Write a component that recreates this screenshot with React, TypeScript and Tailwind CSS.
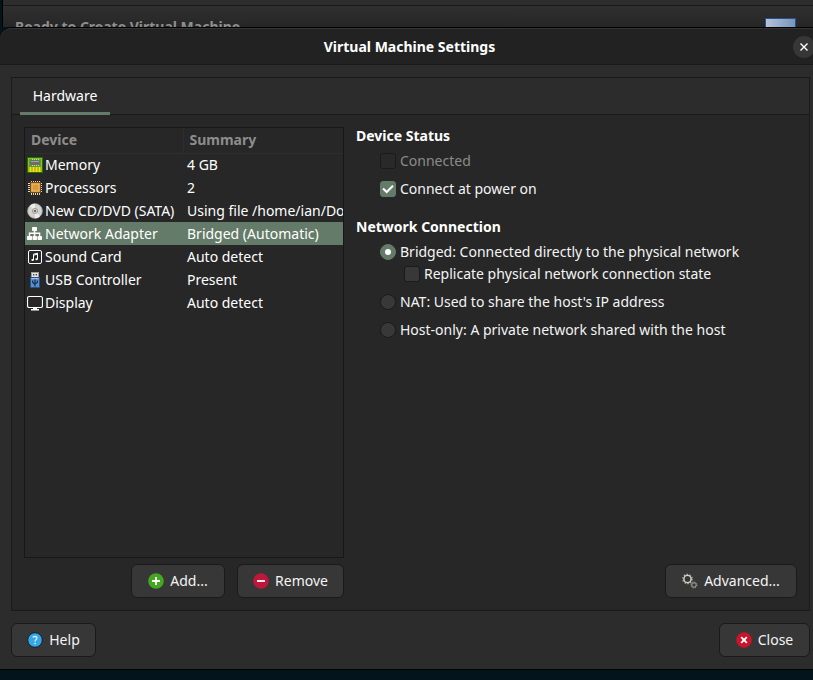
import { useState } from "react";
import type { ReactNode } from "react";

const iconClass = "h-4 w-4 shrink-0";

function MemoryIcon() {
  return (
    <svg viewBox="0 0 16 16" className={iconClass} aria-hidden="true">
      <rect x="0.5" y="0.5" width="15" height="15" fill="#4f9a10" stroke="#2c6a04" />
      <rect x="1.5" y="1.5" width="13" height="13" fill="#5f9c34" stroke="#7cc81c" />
      <rect x="2" y="10" width="12" height="4" fill="#a58a08" />
      <path d="M5.5 2v7M7.5 2v7M9.5 2v7M11.5 2v7" stroke="#cfd4ca" strokeWidth="1" />
      <rect x="3" y="3" width="10" height="5" rx="1.5" fill="#6a6e68" />
      <path d="M4 4.5h8" stroke="#a3a7a0" />
      <path d="M3.5 10v5M6.5 10v5M9.5 10v5M12.5 10v5" stroke="#f4e416" strokeWidth="2" />
    </svg>
  );
}

function ProcessorIcon() {
  return (
    <svg viewBox="0 0 16 16" className={iconClass} aria-hidden="true">
      <path
        d="M4.5 1v14M6.5 1v14M8.5 1v14M10.5 1v14M12.5 1v14M1 3.5h14M1 5.5h14M1 7.5h14M1 9.5h14M1 11.5h14"
        stroke="#d6d6d2"
        strokeWidth="1"
      />
      <rect x="3.500" y="2.500" width="10" height="10" fill="#d08a24" stroke="#7d4a08" />
      <rect x="5" y="4" width="7" height="7" fill="#d9983c" stroke="#eebc72" />
    </svg>
  );
}

function DiscIcon() {
  return (
    <svg viewBox="0 0 16 16" className={iconClass} aria-hidden="true">
      <circle cx="8" cy="8" r="7.300" fill="#d2d2d0" stroke="#b4b4b1" strokeWidth="0.8" />
      <path d="M8 8 3 2.700A7 7 0 0 1 8 .8ZM8 8l5 5.300A7 7 0 0 1 8 15.200Z" fill="#ececea" />
      <circle cx="8" cy="8" r="2.500" fill="#dcdcd9" stroke="#8c8c88" strokeWidth="0.9" />
      <circle cx="8" cy="8" r="1.100" fill="#4e4e4a" />
    </svg>
  );
}

function NetworkIcon() {
  return (
    <svg viewBox="0 0 16 16" className={iconClass} fill="#fff" aria-hidden="true">
      <rect x="5" y="1" width="5" height="4" rx="0.7" />
      <rect x="0" y="10" width="5" height="4" rx="0.7" />
      <rect x="5.500" y="10" width="4.500" height="4" rx="0.7" />
      <rect x="10.500" y="10" width="4.500" height="4" rx="0.7" />
      <path d="M6.800 4h1.500v7H6.800zM1.800 6.500h11.500V8H1.800zM1.800 7h1.400v4H1.800zM12 7h1.300v4H12z" />
    </svg>
  );
}

function SoundIcon() {
  return (
    <svg viewBox="0 0 16 16" className={iconClass} fill="none" stroke="#fff" aria-hidden="true">
      <rect x="1.500" y="1.500" width="13" height="13" rx="1.500" />
      <path d="M6.500 11V5.200l4-1V10" />
      <path d="M6.500 6.200l4-1" />
      <ellipse cx="5.600" cy="11" rx="1.300" ry="1" fill="#fff" stroke="none" />
      <ellipse cx="9.600" cy="10.200" rx="1.300" ry="1" fill="#fff" stroke="none" />
    </svg>
  );
}

function UsbIcon() {
  return (
    <svg viewBox="0 0 16 16" className={iconClass} aria-hidden="true">
      <rect x="4.500" y="0.500" width="7" height="5" fill="#e4e4e2" stroke="#9d9d9a" />
      <path d="M6 2h1.300v1.500H6zM8.700 2H10v1.500H8.700z" fill="#444" />
      <path d="M3.500 5.500h9v10h-9z" fill="#5c90cc" stroke="#24528f" />
      <path d="M4.500 6.500h7" stroke="#98bde6" />
      <path d="M8 7.500v7M5.700 8.500v2L8 12.500M10.300 8.500v2L8 12" fill="none" stroke="#142e50" strokeWidth="1.200" />
    </svg>
  );
}

function DisplayIcon() {
  return (
    <svg viewBox="0 0 16 16" className={iconClass} aria-hidden="true">
      <rect x="0.500" y="1.500" width="15" height="11" rx="1.800" fill="none" stroke="#fff" strokeWidth="1.200" />
      <path d="M6 12.500h4V14h2v1.500H4V14h2z" fill="#fff" />
    </svg>
  );
}

function GearsIcon() {
  return (
    <svg viewBox="0 0 16 16" className={iconClass} fill="none" aria-hidden="true">
      <circle cx="5.500" cy="6" r="4.700" stroke="#b5b1a2" strokeWidth="1.200" strokeDasharray="1.500 1.450" />
      <circle cx="5.500" cy="6" r="3.600" stroke="#d8d5c8" strokeWidth="1.400" />
      <circle cx="12" cy="12" r="3" stroke="#a9a698" strokeWidth="0.9" strokeDasharray="1.200 1.150" />
      <circle cx="12" cy="12" r="2.200" stroke="#a9a698" strokeWidth="1" />
    </svg>
  );
}

function BadgeIcon({ color, children }: { color: string; children: ReactNode }) {
  return (
    <svg viewBox="0 0 16 16" className={iconClass} stroke="#fff" strokeWidth="1.800" aria-hidden="true">
      <circle cx="8" cy="8" r="7.800" fill={color} stroke="none" />
      {children}
    </svg>
  );
}

function HelpIcon() {
  return (
    <svg viewBox="0 0 16 16" className={iconClass} fill="none" aria-hidden="true">
      <circle cx="8" cy="8" r="7.300" fill="#37a6e6" stroke="#10222e" />
      <path d="M5.800 5.300C6.500 4.300 10 3.900 10 6c0 1.500-2 1.700-2 3.500" stroke="#d9effb" strokeWidth="1.300" />
      <path d="M7.300 10.800h1.400v1.400H7.300z" fill="#d9effb" />
    </svg>
  );
}

const devices = [
  { name: "Memory", summary: "4 GB", icon: <MemoryIcon /> },
  { name: "Processors", summary: "2", icon: <ProcessorIcon /> },
  { name: "New CD/DVD (SATA)", summary: "Using file /home/ian/Downloads", icon: <DiscIcon /> },
  { name: "Network Adapter", summary: "Bridged (Automatic)", icon: <NetworkIcon /> },
  { name: "Sound Card", summary: "Auto detect", icon: <SoundIcon /> },
  { name: "USB Controller", summary: "Present", icon: <UsbIcon /> },
  { name: "Display", summary: "Auto detect", icon: <DisplayIcon /> },
];

function Button({ icon, width, children }: { icon: ReactNode; width: string; children: ReactNode }) {
  return (
    <button
      type="button"
      className={`flex h-[34px] items-center justify-center gap-1.5 rounded-md border border-[#1a1a1a] bg-[#373737] whitespace-nowrap ${width}`}
    >
      {icon}
      {children}
    </button>
  );
}

function Check(props: { label: string; checked?: boolean; disabled?: boolean; className: string }) {
  const [on, setOn] = useState(!!props.checked);
  return (
    <label className={`flex items-center gap-1 ${props.disabled ? "text-[#8b8b8b]" : ""} ${props.className}`}>
      <span className="grid h-4 w-4 shrink-0">
        <input
          type="checkbox"
          checked={on}
          disabled={props.disabled}
          onChange={() => setOn(!on)}
          className="col-start-1 row-start-1 h-4 w-4 appearance-none rounded-[3px] border border-[#1b1b1b] bg-[#383838] checked:border-[#657b69] checked:bg-[#657b69] disabled:bg-[#292929]"
        />
        {on && (
          <svg viewBox="0 0 16 16" className="pointer-events-none col-start-1 row-start-1 h-4 w-4" fill="none" stroke="#fff" strokeWidth="2" aria-hidden="true">
            <path d="M3 7.500 6.700 11 13 4.700" />
          </svg>
        )}
      </span>
      {props.label}
    </label>
  );
}

function Radio(props: { label: string; checked: boolean; onSelect: () => void; className: string }) {
  return (
    <label className={`flex items-center gap-1 ${props.className}`}>
      <input
        type="radio"
        name="network-connection"
        checked={props.checked}
        onChange={props.onSelect}
        className="grid h-4 w-4 shrink-0 appearance-none place-items-center rounded-full border border-[#1b1b1b] bg-[#383838] checked:border-[#657b69] checked:bg-[#657b69] checked:before:h-1.5 checked:before:w-1.5 checked:before:rounded-full checked:before:bg-white"
      />
      {props.label}
    </label>
  );
}

export default function App() {
  const [selected, setSelected] = useState("Network Adapter");
  const [mode, setMode] = useState("bridged");

  return (
    <div className="flex h-screen min-h-[420px] flex-col overflow-hidden bg-[#04141d] font-['Noto_Sans',sans-serif] text-[14px] leading-[18px] text-[#f4f4f4]">
      <div className="h-[27px] shrink-0 overflow-hidden pl-0.5">
        <div className="h-full border-l border-black bg-[#2d2d2d]">
          <div className="h-1.5 border-b border-[#1a1a1a]" />
          <div className="flex h-[21px] items-start justify-between overflow-hidden bg-linear-to-b from-[#303030] to-[#262626] pt-3 pr-[17px] pl-3">
            <p className="font-bold text-[#8f8f8f]">Ready to Create Virtual Machine</p>
            <div className="h-6 w-[31px] border border-[#28508c] bg-linear-to-r from-[#b6c3da] to-[#7795ba]" />
          </div>
        </div>
      </div>

      <main className="-mr-2 flex min-h-0 flex-1 flex-col rounded-t-xl border-y border-y-black bg-[#2c2c2c]">
        <header className="grid h-[37px] shrink-0 grid-cols-[1fr_auto_1fr] items-center rounded-t-xl border-t border-b border-t-[#343434] border-b-[#191919] bg-[#222222] pr-1.5">
          <h1 className="col-start-2 pl-1 font-bold text-white">Virtual Machine Settings</h1>
          <button type="button" aria-label="Close window" className="grid h-[22px] w-[22px] place-items-center justify-self-end rounded-full bg-[#373737]">
            <svg viewBox="0 0 8 8" className="h-2 w-2" stroke="#fff" strokeWidth="1.400" aria-hidden="true">
              <path d="M.5.5l7 7M7.500.5l-7 7" />
            </svg>
          </button>
        </header>

        <section className="mx-[11px] mt-3 flex min-h-0 flex-1 flex-col border border-[#1a1a1a] bg-[#272727]">
          <div role="tablist" className="flex h-[37px] shrink-0 border-b border-[#1a1a1a] bg-[#2c2c2c] px-2">
            <button type="button" role="tab" aria-selected="true" className="-mb-px w-[90px] border-b-3 border-[#657b69] pt-0.5 text-white">
              Hardware
            </button>
          </div>

          <div className="flex min-h-0 flex-1 gap-3 p-3">
            <div className="flex w-[320px] shrink-0 flex-col gap-1.5">
              <div className="min-h-0 flex-1 overflow-hidden border border-[#171717] bg-[#272727]">
                <table className="w-full table-fixed border-collapse text-left">
                  <thead>
                    <tr className="h-[25px] text-[#8d8d8d]">
                      <th className="w-[158px] border-r border-b border-[#2e2e2e] py-0 pl-1.5 font-bold">Device</th>
                      <th className="border-b border-[#2e2e2e] py-0 pl-1.5 font-bold">Summary</th>
                    </tr>
                  </thead>
                  <tbody>
                    {devices.map((d) => (
                      <tr
                        key={d.name}
                        onClick={() => setSelected(d.name)}
                        className={`h-[23px] text-white ${d.name === selected ? "bg-[#657b69]" : ""}`}
                      >
                        <td className="py-0 pl-0.5">
                          <span className="flex items-center gap-0.5 whitespace-nowrap">
                            {d.icon}
                            {d.name}
                          </span>
                        </td>
                        <td className="overflow-hidden py-0 pl-1 whitespace-nowrap">{d.summary}</td>
                      </tr>
                    ))}
                  </tbody>
                </table>
              </div>
              <div className="flex justify-end gap-3">
                <Button width="w-[94px]" icon={<BadgeIcon color="#43a820"><path d="M8 4v8M4 8h8" /></BadgeIcon>}>
                  Add...
                </Button>
                <Button width="w-[107px]" icon={<BadgeIcon color="#bd1839"><path d="M4 8h8" /></BadgeIcon>}>
                  Remove
                </Button>
              </div>
            </div>

            <div className="flex min-w-0 flex-1 flex-col">
              <h2 className="font-bold text-white">Device Status</h2>
              <div className="mt-0.5 pl-6">
                <Check label="Connected" disabled className="h-7" />
                <Check label="Connect at power on" checked className="h-7" />
              </div>
              <h2 className="mt-[15px] font-bold text-white">Network Connection</h2>
              <div className="mt-[5px] pl-6">
                <Radio label="Bridged: Connected directly to the physical network" checked={mode === "bridged"} onSelect={() => setMode("bridged")} className="h-[22px]" />
                <Check label="Replicate physical network connection state" className="mb-[3px] ml-6 h-[22px]" />
                <Radio label="NAT: Used to share the host's IP address" checked={mode === "nat"} onSelect={() => setMode("nat")} className="h-7" />
                <Radio label="Host-only: A private network shared with the host" checked={mode === "host"} onSelect={() => setMode("host")} className="h-7" />
              </div>
              <div className="mt-auto flex justify-end">
                <Button width="w-[132px]" icon={<GearsIcon />}>
                  Advanced...
                </Button>
              </div>
            </div>
          </div>
        </section>

        <footer className="flex shrink-0 justify-between px-[11px] py-3">
          <Button width="w-[85px]" icon={<HelpIcon />}>
            Help
          </Button>
          <Button width="w-[91px]" icon={<BadgeIcon color="#c9152b"><path d="M5.200 5.200l5.600 5.600M10.800 5.200l-5.600 5.600" /></BadgeIcon>}>
            Close
          </Button>
        </footer>
      </main>
      <div className="h-2.5 shrink-0" />
    </div>
  );
}
